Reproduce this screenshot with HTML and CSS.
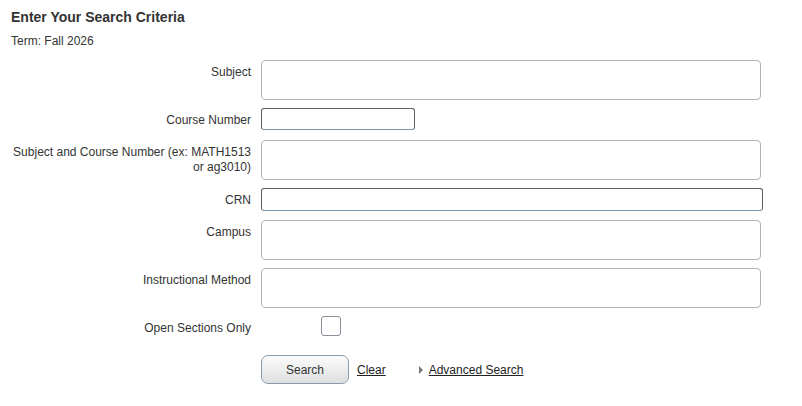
FILE: index.html
```html
<!DOCTYPE html>
<html lang="en">
<head>
<meta charset="utf-8">
<title>Enter Your Search Criteria</title>
<link rel="stylesheet" href="styles.css">
</head>
<body>
<div class="page">
  <h1 class="title">Enter Your Search Criteria</h1>
  <div class="term">Term: Fall 2026</div>
  <form class="form">
    <div class="row">
      <label class="label">Subject</label>
      <div class="field"><div class="multi"></div></div>
    </div>
    <div class="row row-short">
      <label class="label">Course Number</label>
      <div class="field"><input class="text text-course" type="text"></div>
    </div>
    <div class="row">
      <label class="label">Subject and Course Number (ex: MATH1513 or ag3010)</label>
      <div class="field"><div class="multi"></div></div>
    </div>
    <div class="row row-short">
      <label class="label">CRN</label>
      <div class="field"><input class="text text-crn" type="text"></div>
    </div>
    <div class="row">
      <label class="label">Campus</label>
      <div class="field"><div class="multi"></div></div>
    </div>
    <div class="row">
      <label class="label">Instructional Method</label>
      <div class="field"><div class="multi"></div></div>
    </div>
    <div class="row row-check">
      <label class="label">Open Sections Only</label>
      <div class="field"><span class="checkbox"></span></div>
    </div>
    <div class="actions">
      <button type="button" class="btn">Search</button>
      <a class="link" href="#">Clear</a>
      <span class="adv"><span class="tri"></span><a class="link" href="#">Advanced Search</a></span>
    </div>
  </form>
</div>
</body>
</html>
```

FILE: styles.css
```css
html, body {
  margin: 0;
  padding: 0;
  background: #ffffff;
}
body {
  font-family: "Liberation Sans", Arial, sans-serif;
  font-size: 12px;
  color: #333333;
}
.page {
  padding: 9px 0 0 11px;
}
.title {
  margin: 0;
  font-size: 14px;
  font-weight: bold;
  line-height: 16px;
  color: #333333;
}
.term {
  margin-top: 9px;
  line-height: 14px;
}
.form {
  margin-top: 12px;
  display: flex;
  flex-direction: column;
  gap: 8px;
}
.row {
  display: flex;
  align-items: flex-start;
}
.label {
  width: 240px;
  flex: none;
  text-align: right;
  line-height: 15px;
  padding-top: 5px;
  margin-right: 10px;
}
.field {
  flex: none;
}
.multi {
  box-sizing: border-box;
  width: 500px;
  height: 40px;
  border: 1px solid #b3b3b3;
  border-radius: 4px;
  background: #fff;
}
.row-short {
  height: 24px;
}
.text {
  display: block;
  box-sizing: border-box;
  margin: 0;
  padding: 0 4px;
  border: 1px solid #5a6066;
  border-bottom-color: #7593ab;
  border-radius: 3px;
  background: #fff;
  font: inherit;
}
.text-course {
  width: 154px;
  height: 22px;
}
.text-crn {
  width: 502px;
  height: 23px;
}
.checkbox {
  display: block;
  box-sizing: border-box;
  margin-left: 60px;
  width: 20px;
  height: 20px;
  border: 1px solid #8c8c99;
  border-radius: 3px;
  background: #fff;
}
.actions {
  margin-top: 11px;
  margin-left: 250px;
  display: flex;
  align-items: center;
  height: 29px;
}
.btn {
  box-sizing: border-box;
  width: 88px;
  height: 29px;
  margin: 0;
  padding: 0;
  border: 1px solid #8a9aa9;
  border-radius: 7px;
  background: linear-gradient(#fbfbfb, #dedfe0);
  font: inherit;
  color: #333;
}
.link {
  color: #222222;
  text-decoration: underline;
}
.actions > .link {
  margin-left: 8px;
}
.adv {
  display: flex;
  align-items: center;
  margin-left: 33px;
}
.tri {
  width: 0;
  height: 0;
  border-top: 4px solid transparent;
  border-bottom: 4px solid transparent;
  border-left: 4px solid #777;
  margin-right: 6px;
}
```
